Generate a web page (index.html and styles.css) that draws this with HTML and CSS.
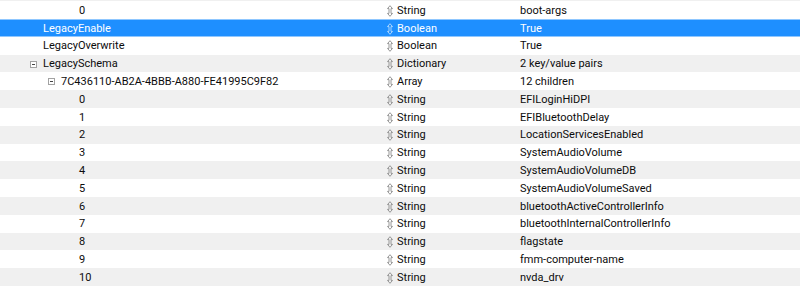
FILE: index.html
```html
<!DOCTYPE html>
<html lang="en">

<head>
  <meta charset="UTF-8">
  <meta name="viewport" content="width=device-width, initial-scale=1.0">
  <title>Plist Editor - Legacy Schema</title>
  <link rel="stylesheet" href="styles.css">
</head>

<body>
  <div class="tree">
    <div class="row alt">
      <div class="key lvl-3"></div>
      <div class="type"></div>
      <div class="value"></div>
    </div>
    <div class="row">
      <div class="key lvl-3">0</div>
      <div class="type"><svg class="updown" width="6" height="12" viewBox="0 0 6 12"><path d="M3 0.7 L5.5 3.6 L4 3.6 L4 8.4 L5.5 8.4 L3 11.3 L0.5 8.4 L2 8.4 L2 3.6 L0.5 3.6 Z"/></svg>String</div>
      <div class="value">boot-args</div>
    </div>
    <div class="row selected">
      <div class="key lvl-1">LegacyEnable</div>
      <div class="type"><svg class="updown" width="6" height="12" viewBox="0 0 6 12"><path d="M3 0.7 L5.5 3.6 L4 3.6 L4 8.4 L5.5 8.4 L3 11.3 L0.5 8.4 L2 8.4 L2 3.6 L0.5 3.6 Z"/></svg>Boolean</div>
      <div class="value">True</div>
    </div>
    <div class="row">
      <div class="key lvl-1">LegacyOverwrite</div>
      <div class="type"><svg class="updown" width="6" height="12" viewBox="0 0 6 12"><path d="M3 0.7 L5.5 3.6 L4 3.6 L4 8.4 L5.5 8.4 L3 11.3 L0.5 8.4 L2 8.4 L2 3.6 L0.5 3.6 Z"/></svg>Boolean</div>
      <div class="value">True</div>
    </div>
    <div class="row alt">
      <div class="key lvl-1"><span class="toggle"></span>LegacySchema</div>
      <div class="type"><svg class="updown" width="6" height="12" viewBox="0 0 6 12"><path d="M3 0.7 L5.5 3.6 L4 3.6 L4 8.4 L5.5 8.4 L3 11.3 L0.5 8.4 L2 8.4 L2 3.6 L0.5 3.6 Z"/></svg>Dictionary</div>
      <div class="value">2 key/value pairs</div>
    </div>
    <div class="row">
      <div class="key lvl-2"><span class="toggle"></span>7C436110-AB2A-4BBB-A880-FE41995C9F82</div>
      <div class="type"><svg class="updown" width="6" height="12" viewBox="0 0 6 12"><path d="M3 0.7 L5.5 3.6 L4 3.6 L4 8.4 L5.5 8.4 L3 11.3 L0.5 8.4 L2 8.4 L2 3.6 L0.5 3.6 Z"/></svg>Array</div>
      <div class="value">12 children</div>
    </div>
    <div class="row alt">
      <div class="key lvl-3">0</div>
      <div class="type"><svg class="updown" width="6" height="12" viewBox="0 0 6 12"><path d="M3 0.7 L5.5 3.6 L4 3.6 L4 8.4 L5.5 8.4 L3 11.3 L0.5 8.4 L2 8.4 L2 3.6 L0.5 3.6 Z"/></svg>String</div>
      <div class="value">EFILoginHiDPI</div>
    </div>
    <div class="row">
      <div class="key lvl-3">1</div>
      <div class="type"><svg class="updown" width="6" height="12" viewBox="0 0 6 12"><path d="M3 0.7 L5.5 3.6 L4 3.6 L4 8.4 L5.5 8.4 L3 11.3 L0.5 8.4 L2 8.4 L2 3.6 L0.5 3.6 Z"/></svg>String</div>
      <div class="value">EFIBluetoothDelay</div>
    </div>
    <div class="row alt">
      <div class="key lvl-3">2</div>
      <div class="type"><svg class="updown" width="6" height="12" viewBox="0 0 6 12"><path d="M3 0.7 L5.5 3.6 L4 3.6 L4 8.4 L5.5 8.4 L3 11.3 L0.5 8.4 L2 8.4 L2 3.6 L0.5 3.6 Z"/></svg>String</div>
      <div class="value">LocationServicesEnabled</div>
    </div>
    <div class="row">
      <div class="key lvl-3">3</div>
      <div class="type"><svg class="updown" width="6" height="12" viewBox="0 0 6 12"><path d="M3 0.7 L5.5 3.6 L4 3.6 L4 8.4 L5.5 8.4 L3 11.3 L0.5 8.4 L2 8.4 L2 3.6 L0.5 3.6 Z"/></svg>String</div>
      <div class="value">SystemAudioVolume</div>
    </div>
    <div class="row alt">
      <div class="key lvl-3">4</div>
      <div class="type"><svg class="updown" width="6" height="12" viewBox="0 0 6 12"><path d="M3 0.7 L5.5 3.6 L4 3.6 L4 8.4 L5.5 8.4 L3 11.3 L0.5 8.4 L2 8.4 L2 3.6 L0.5 3.6 Z"/></svg>String</div>
      <div class="value">SystemAudioVolumeDB</div>
    </div>
    <div class="row">
      <div class="key lvl-3">5</div>
      <div class="type"><svg class="updown" width="6" height="12" viewBox="0 0 6 12"><path d="M3 0.7 L5.5 3.6 L4 3.6 L4 8.4 L5.5 8.4 L3 11.3 L0.5 8.4 L2 8.4 L2 3.6 L0.5 3.6 Z"/></svg>String</div>
      <div class="value">SystemAudioVolumeSaved</div>
    </div>
    <div class="row alt">
      <div class="key lvl-3">6</div>
      <div class="type"><svg class="updown" width="6" height="12" viewBox="0 0 6 12"><path d="M3 0.7 L5.5 3.6 L4 3.6 L4 8.4 L5.5 8.4 L3 11.3 L0.5 8.4 L2 8.4 L2 3.6 L0.5 3.6 Z"/></svg>String</div>
      <div class="value">bluetoothActiveControllerInfo</div>
    </div>
    <div class="row">
      <div class="key lvl-3">7</div>
      <div class="type"><svg class="updown" width="6" height="12" viewBox="0 0 6 12"><path d="M3 0.7 L5.5 3.6 L4 3.6 L4 8.4 L5.5 8.4 L3 11.3 L0.5 8.4 L2 8.4 L2 3.6 L0.5 3.6 Z"/></svg>String</div>
      <div class="value">bluetoothInternalControllerInfo</div>
    </div>
    <div class="row alt">
      <div class="key lvl-3">8</div>
      <div class="type"><svg class="updown" width="6" height="12" viewBox="0 0 6 12"><path d="M3 0.7 L5.5 3.6 L4 3.6 L4 8.4 L5.5 8.4 L3 11.3 L0.5 8.4 L2 8.4 L2 3.6 L0.5 3.6 Z"/></svg>String</div>
      <div class="value">flagstate</div>
    </div>
    <div class="row">
      <div class="key lvl-3">9</div>
      <div class="type"><svg class="updown" width="6" height="12" viewBox="0 0 6 12"><path d="M3 0.7 L5.5 3.6 L4 3.6 L4 8.4 L5.5 8.4 L3 11.3 L0.5 8.4 L2 8.4 L2 3.6 L0.5 3.6 Z"/></svg>String</div>
      <div class="value">fmm-computer-name</div>
    </div>
    <div class="row alt">
      <div class="key lvl-3">10</div>
      <div class="type"><svg class="updown" width="6" height="12" viewBox="0 0 6 12"><path d="M3 0.7 L5.5 3.6 L4 3.6 L4 8.4 L5.5 8.4 L3 11.3 L0.5 8.4 L2 8.4 L2 3.6 L0.5 3.6 Z"/></svg>String</div>
      <div class="value">nvda_drv</div>
    </div>
  </div>
</body>

</html>
```

FILE: styles.css
```css
* {
  padding: 0;
  margin: 0;
  box-sizing: border-box;
}

html,
body {
  height: 289px;
  overflow: hidden;
  background: #fff;
}

body {
  font-family: Roboto, "Liberation Sans", sans-serif;
  font-size: 11px;
  color: #0c0c0c;
}

/* first row is scrolled mostly out of view */
.tree {
  margin-top: -16.5px;
}

.row {
  display: grid;
  grid-template-columns: 384px 132px 1fr;
  height: 17.8px;
  line-height: 17.8px;
  padding-top: 0.6px;
  white-space: nowrap;
}

.row.alt {
  background: #f0f0f0;
}

.row.selected {
  background: #1e8fff;
  color: #fff;
  border-top: 1px solid #8fc7ff;
  border-bottom: 1px solid #8fc7ff;
  line-height: 15.8px;
}

.key {
  display: flex;
  align-items: center;
}

.lvl-1 {
  padding-left: 43px;
}

.lvl-2 {
  padding-left: 61px;
}

.lvl-3 {
  padding-left: 79px;
}

.toggle {
  position: relative;
  width: 7px;
  height: 7px;
  margin-left: -13px;
  margin-right: 6px;
  border: 1px solid #a2a2a2;
  background: #fff;
}

.toggle::after {
  content: "";
  position: absolute;
  left: 1px;
  top: 2px;
  width: 3px;
  height: 1px;
  background: #444;
}

.type {
  display: flex;
  align-items: center;
  padding-left: 3px;
}

.updown {
  margin-right: 4px;
  fill: none;
  stroke: #8c8c8c;
  stroke-width: 0.9;
}

.selected .updown {
  stroke: #b9dcff;
}

.value {
  padding-left: 4px;
}
```
